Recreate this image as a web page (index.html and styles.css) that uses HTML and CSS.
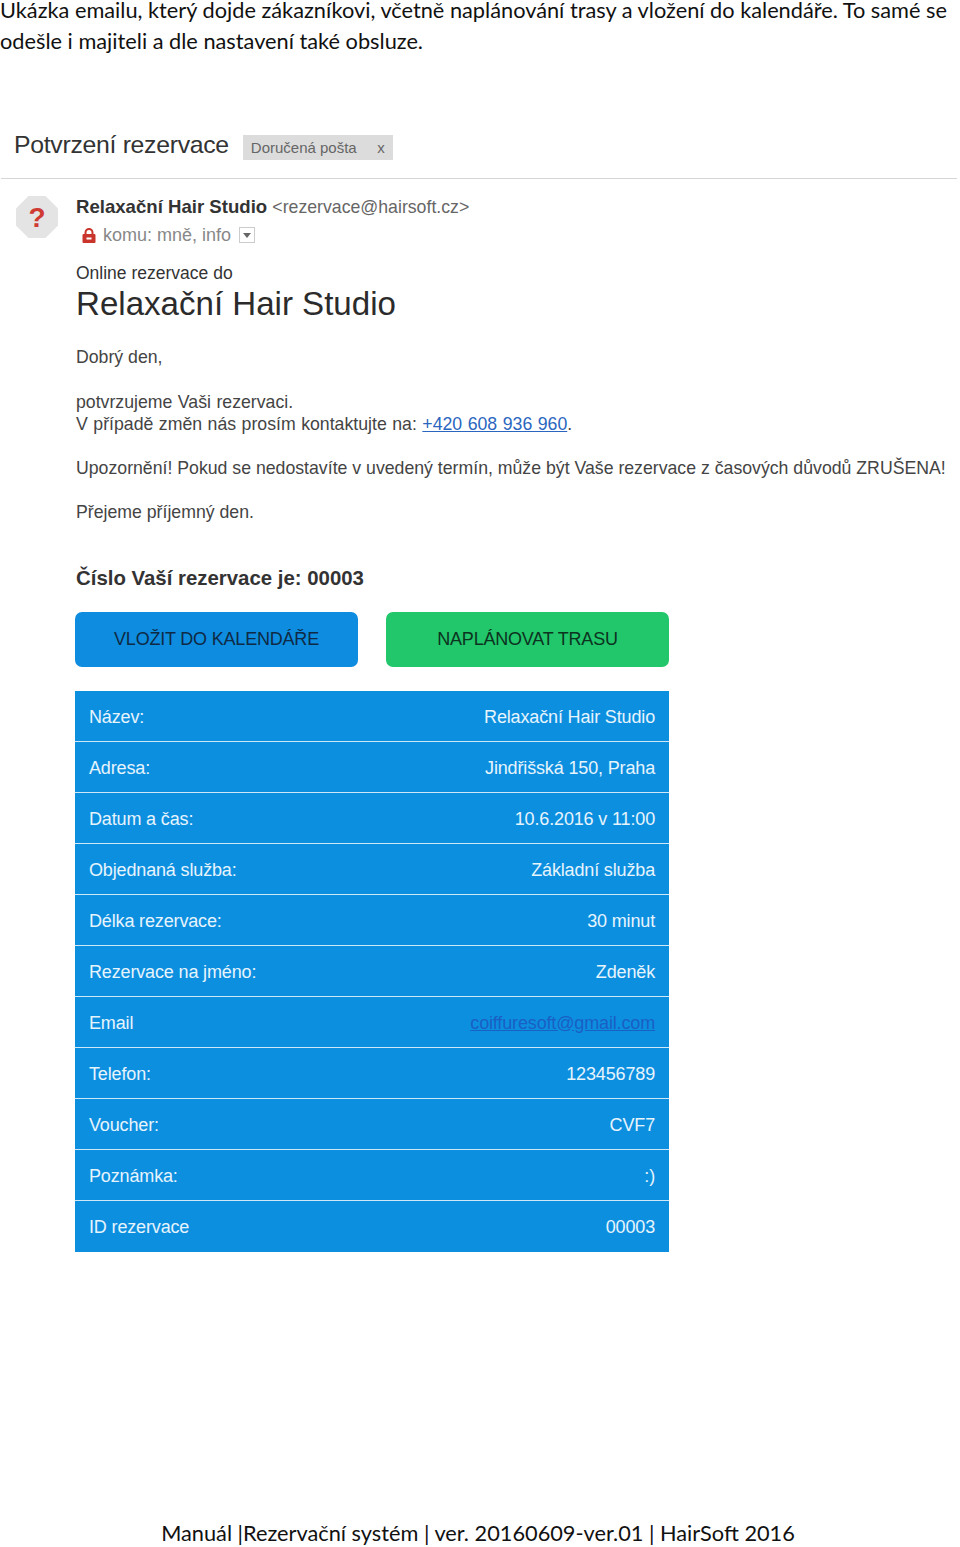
FILE: index.html
```html
<!DOCTYPE html>
<html lang="cs">
<head>
<meta charset="utf-8">
<title>Ukázka emailu</title>
<link rel="stylesheet" href="styles.css">
</head>
<body>
<div class="page">
  <p class="intro"><span class="intro-line">Ukázka emailu, který dojde zákazníkovi, včetně naplánování trasy a vložení do kalendáře. To samé se</span> <span class="intro-line">odešle i majiteli a dle nastavení také obsluze.</span></p>
  <section class="shot">
    <header class="subject">
      <h1 class="subject-title">Potvrzení rezervace</h1>
      <span class="tag"><span>Doručená pošta</span><span class="tag-x">x</span></span>
    </header>
    <div class="mail">
      <svg class="avatar" viewBox="0 0 42 42" aria-hidden="true">
        <polygon points="12.5,0 29.5,0 42,12.5 42,29.5 29.5,42 12.5,42 0,29.5 0,12.5" fill="#e4e4e4"/>
        <text x="21" y="31" text-anchor="middle" class="avatar-q">?</text>
      </svg>
      <div class="mail-body">
        <div class="mail-text">
          <div class="sender"><b>Relaxační Hair Studio</b> <span class="sender-addr">&lt;rezervace@hairsoft.cz&gt;</span></div>
          <div class="recipients">
            <svg class="lock" viewBox="0 0 14 15" aria-hidden="true">
              <path d="M3.5 7V4.5a3.5 3.5 0 0 1 7 0V7" fill="none" stroke="#c9352b" stroke-width="2"/>
              <rect x="0.5" y="6" width="13" height="9" rx="1" fill="#c9352b"/>
              <rect x="4.5" y="9.5" width="5" height="2" fill="#fff"/>
            </svg>
            <span>komu: mně, info</span>
            <span class="caret"></span>
          </div>
          <div class="online">Online rezervace do</div>
          <h2 class="studio">Relaxační Hair Studio</h2>
          <p class="greet">Dobrý den,</p>
          <p class="confirm">potvrzujeme Vaši rezervaci.<br>V případě změn nás prosím kontaktujte na: <a class="phone" href="#">+420 608 936 960</a>.</p>
          <p class="warn">Upozornění! Pokud se nedostavíte v uvedený termín, může být Vaše rezervace z časových důvodů ZRUŠENA!</p>
          <p class="wish">Přejeme příjemný den.</p>
          <p class="number">Číslo Vaší rezervace je: 00003</p>
        </div>
        <div class="actions">
          <a class="btn btn-blue" href="#">VLOŽIT DO KALENDÁŘE</a>
          <a class="btn btn-green" href="#">NAPLÁNOVAT TRASU</a>
        </div>
        <div class="details">
          <div class="row"><span>Název:</span><span>Relaxační Hair Studio</span></div>
          <div class="row"><span>Adresa:</span><span>Jindřišská 150, Praha</span></div>
          <div class="row"><span>Datum a čas:</span><span>10.6.2016 v 11:00</span></div>
          <div class="row"><span>Objednaná služba:</span><span>Základní služba</span></div>
          <div class="row"><span>Délka rezervace:</span><span>30 minut</span></div>
          <div class="row"><span>Rezervace na jméno:</span><span>Zdeněk</span></div>
          <div class="row"><span>Email</span><a class="mail-link" href="#">coiffuresoft@gmail.com</a></div>
          <div class="row"><span>Telefon:</span><span>123456789</span></div>
          <div class="row"><span>Voucher:</span><span>CVF7</span></div>
          <div class="row"><span>Poznámka:</span><span>:)</span></div>
          <div class="row"><span>ID rezervace</span><span>00003</span></div>
        </div>
      </div>
    </div>
  </section>
  <footer class="foot">Manuál |Rezervační systém | ver. 20160609-ver.01 | HairSoft 2016</footer>
</div>
</body>
</html>
```
FILE: styles.css
```css
* { box-sizing: border-box; }
html, body { margin: 0; padding: 0; background: #fff; }
.page {
  width: 960px;
  height: 1547px;
  display: flex;
  flex-direction: column;
  font-family: "Liberation Sans", Arial, sans-serif;
  overflow: hidden;
}
.intro {
  margin: 0;
  font-family: Lato, "Open Sans", sans-serif;
  font-size: 21.75px;
  color: #111;
  width: 952px;
}
.intro-line { display: block; line-height: 20px; white-space: nowrap; }
.intro-line + .intro-line { margin-top: 11px; }
.shot {
  margin: 81px 0 0 1px;
  width: 956px;
  color: #2b2b2b;
}
.subject {
  height: 47px;
  border-bottom: 1px solid #d6d6d6;
  padding: 0 0 15px 13px;
  display: flex;
  align-items: center;
  gap: 14px;
}
.subject-title {
  margin: 0 0 5px;
  font-size: 24.8px;
  font-weight: 400;
  letter-spacing: -0.3px;
  color: #333;
}
.tag {
  width: 150px;
  height: 25px;
  background: #dcdcdc;
  color: #666;
  font-size: 15px;
  display: flex;
  align-items: center;
  justify-content: space-between;
  padding: 0 8px;
}
.mail {
  display: flex;
  padding: 16px 0 0 15px;
}
.avatar { width: 42px; height: 42px; flex: none; margin-top: 1px; }
.avatar-q { font: 700 28px "Liberation Sans", Arial, sans-serif; fill: #cf3a32; }
.mail-body { margin-left: 17px; flex: 1; font-size: 17.7px; color: #444; }
.mail-text { padding-left: 1px; }
.sender { height: 24px; line-height: 24px; font-size: 18.6px; }
.sender b { color: #333; }
.sender-addr { color: #666; font-size: 17.7px; }
.recipients {
  height: 32px;
  display: flex;
  align-items: center;
  color: #888;
  padding-left: 6px;
  font-size: 18px;
}
.lock { width: 14px; height: 15px; margin-right: 7px; }
.caret {
  width: 16px;
  height: 16px;
  margin-left: 8px;
  border: 1px solid #ccc;
  position: relative;
}
.caret::after {
  content: "";
  position: absolute;
  left: 3px;
  top: 5px;
  border: 4px solid transparent;
  border-top: 5px solid #666;
  border-bottom: 0;
}
.online { margin-top: 10px; line-height: 24px; color: #333; font-size: 17.5px; }
.studio {
  margin: 1px 0 0;
  font-size: 33.1px;
  line-height: 36px;
  font-weight: 400;
  color: #2b2b2b;
}
.greet { margin: 23px 0 0; line-height: 24px; }
.confirm { margin: 22px 0 0; line-height: 22px; word-spacing: 0.6px; }
.phone { color: #2a66c0; }
.warn { margin: 21px 0 0; line-height: 24px; white-space: nowrap; }
.wish { margin: 20px 0 0; line-height: 24px; }
.number { margin: 41px 0 0; line-height: 26px; font-size: 20.4px; font-weight: 700; color: #333; }
.actions { display: flex; gap: 28px; margin-top: 21px; }
.btn {
  width: 283px;
  height: 55px;
  border-radius: 7px;
  display: flex;
  align-items: center;
  justify-content: center;
  font-size: 18px;
  color: #0f2a44;
  text-decoration: none;
  letter-spacing: -0.2px;
}
.btn-blue { background: #0d8ce0; }
.btn-green { background: #22c66b; color: #0c3320; }
.details { margin-top: 24px; width: 594px; }
.row {
  height: 51px;
  background: #0d8fe0;
  border-bottom: 1px solid #cfe8f8;
  color: #e6f4fc;
  font-size: 18px;
  letter-spacing: -0.15px;
  padding: 2px 14px 0;
  display: flex;
  align-items: center;
  justify-content: space-between;
}
.row:last-child { border-bottom: 0; }
.mail-link { color: #1a5fc4; }
.foot {
  margin-top: auto;
  text-align: center;
  font-family: Lato, "Open Sans", sans-serif;
  font-size: 21.75px;
  line-height: 27px;
  color: #111;
  padding: 0 4px 0 0;
}
```
